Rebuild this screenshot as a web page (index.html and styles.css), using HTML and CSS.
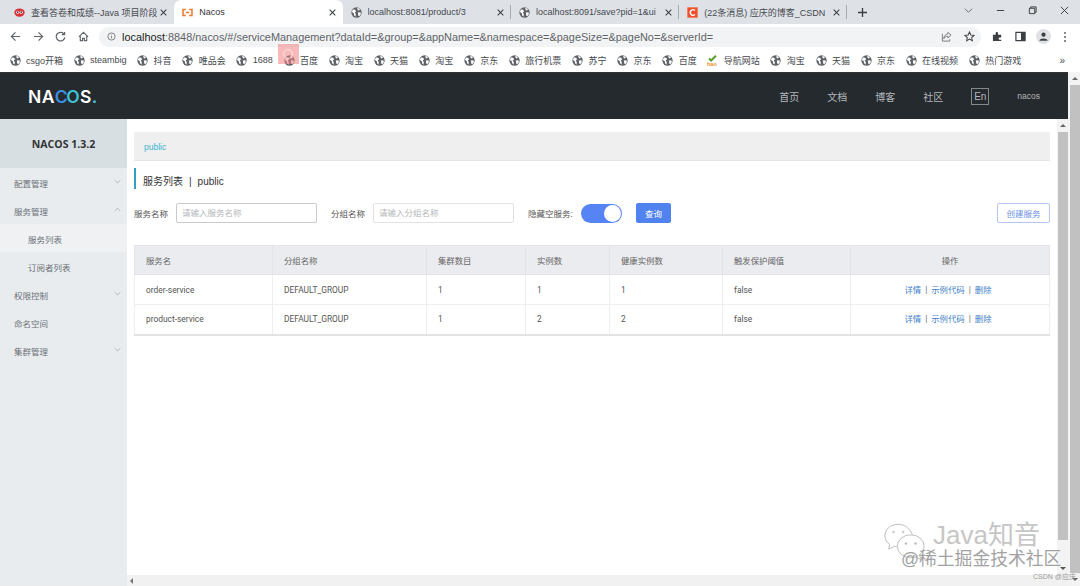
FILE: index.html
```html
<!DOCTYPE html>
<html lang="zh">
<head>
<meta charset="utf-8">
<title>Nacos</title>
<link rel="stylesheet" href="styles.css">
</head>
<body>
<svg class="defs" width="0" height="0" aria-hidden="true">
  <symbol id="globe" viewBox="0 0 16 16"><circle cx="8" cy="8" r="7.500" fill="#5f6368"/><path d="M3 3.500l3 .5 1.500 2-2 2 1.500 2.500-.5 3.500-2-2-.5-3L1 7zM9 1.500l3 .5 1 2-2.500 1-1-1.500zM10 8l3.500-.5L14.500 10 12 13.500l-1.500-1z" fill="#fff"/></symbol>
  <symbol id="close" viewBox="0 0 10 10"><path d="M1 1l8 8M9 1l-8 8" stroke="#3c4043" stroke-width="1.500" fill="none"/></symbol>
  <symbol id="down" viewBox="0 0 10 6"><path d="M1 1l4 4 4-4" stroke="#9aa0a6" stroke-width="1" fill="none"/></symbol>
  <symbol id="up" viewBox="0 0 10 6"><path d="M1 5l4-4 4 4" stroke="#9aa0a6" stroke-width="1" fill="none"/></symbol>
</svg>

<div class="tabstrip">
  <div class="tab">
    <svg class="fav" viewBox="0 0 16 16"><ellipse cx="8" cy="8" rx="7.500" ry="6" fill="#d9303a"/><circle cx="5.500" cy="7.500" r="2.200" fill="#fff"/><circle cx="10.500" cy="7.500" r="2.200" fill="#fff"/><circle cx="5.500" cy="7.500" r="1.200" fill="#222"/><circle cx="10.500" cy="7.500" r="1.200" fill="#222"/></svg>
    <span class="tab-title">查看答卷和成绩--Java 项目阶段</span>
    <svg class="tab-x"><use href="#close"/></svg>
  </div>
  <div class="tab active">
    <svg class="fav" viewBox="0 0 16 16"><path d="M5.500 3.500H1.500v9h4M10.500 3.500h4v9h-4M5.500 8h5" stroke="#f0762b" stroke-width="2.200" fill="none"/></svg>
    <span class="tab-title">Nacos</span>
    <svg class="tab-x"><use href="#close"/></svg>
  </div>
  <div class="tab">
    <svg class="fav"><use href="#globe"/></svg>
    <span class="tab-title">localhost:8081/product/3</span>
    <svg class="tab-x"><use href="#close"/></svg>
  </div>
  <i class="tab-sep"></i>
  <div class="tab">
    <svg class="fav"><use href="#globe"/></svg>
    <span class="tab-title">localhost:8091/save?pid=1&amp;ui</span>
    <svg class="tab-x"><use href="#close"/></svg>
  </div>
  <i class="tab-sep"></i>
  <div class="tab">
    <svg class="fav" viewBox="0 0 16 16"><rect x="0.500" y="0.500" width="15" height="15" fill="#f0512d"/><path d="M11.500 5A4 4 0 1 0 11.500 11" stroke="#fff" stroke-width="2" fill="none"/></svg>
    <span class="tab-title">(22条消息) 应庆的博客_CSDN</span>
    <svg class="tab-x"><use href="#close"/></svg>
  </div>
  <i class="tab-sep"></i>
  <svg class="newtab" viewBox="0 0 10 10"><path d="M5 0v10M0 5h10" stroke="#3c4043" stroke-width="1.500"/></svg>
  <div class="win-controls">
    <svg class="wc" viewBox="0 0 10 10"><path d="M1 3l4 4 4-4" stroke="#5f6368" fill="none"/></svg>
    <svg class="wc" viewBox="0 0 10 10"><path d="M1 5h8" stroke="#333"/></svg>
    <svg class="wc" viewBox="0 0 10 10"><path d="M1.500 2.500h6v6h-6zM3 2.500V1h6v6H7.500" stroke="#333" fill="none"/></svg>
    <svg class="wc" viewBox="0 0 10 10"><path d="M1 1l8 8M9 1l-8 8" stroke="#333" fill="none"/></svg>
  </div>
</div>

<div class="toolbar">
  <svg class="nav" viewBox="0 0 12 12"><path d="M11 6H1.500M6 1.500L1.500 6 6 10.500" stroke="#5f6368" stroke-width="1.300" fill="none"/></svg>
  <svg class="nav" viewBox="0 0 12 12"><path d="M1 6h9.500M6 1.500L10.500 6 6 10.500" stroke="#5f6368" stroke-width="1.300" fill="none"/></svg>
  <svg class="nav" viewBox="0 0 12 12"><path d="M10 3.500A4.700 4.700 0 1 0 10.700 7M10.500 1v3h-3" stroke="#5f6368" stroke-width="1.300" fill="none"/></svg>
  <svg class="nav" viewBox="0 0 12 12"><path d="M1 6.500L6 1.500l5 5M2.500 5.500v5h2.500V8h2v2.500h2.500v-5" stroke="#5f6368" stroke-width="1.200" fill="none"/></svg>
  <div class="omnibox">
    <svg class="info" viewBox="0 0 12 12"><circle cx="6" cy="6" r="4.800" stroke="#5f6368" fill="none"/><path d="M6 5.500v3M6 3.500v1" stroke="#5f6368"/></svg>
    <span class="url"><b>localhost</b>:8848/nacos/#/serviceManagement?dataId=&amp;group=&amp;appName=&amp;namespace=&amp;pageSize=&amp;pageNo=&amp;serverId=</span>
    <svg class="omni-icon" viewBox="0 0 12 12"><path d="M7.500 1.500L11 4.500 7.500 7.500V5.800C5 5.800 3.500 7 3 8.500 3 5.500 5 3.500 7.500 3.300zM1.500 3v8h8V9" stroke="#777" fill="none"/></svg>
    <svg class="omni-icon" viewBox="0 0 12 12"><path d="M6 1l1.500 3.300 3.500.4-2.600 2.400.7 3.500L6 8.800 2.900 10.600l.7-3.500L1 4.700l3.500-.4z" stroke="#444" stroke-width="1.100" fill="none"/></svg>
  </div>
  <svg class="ext" viewBox="0 0 12 12"><path d="M1 4h3V2.500a1.300 1.300 0 0 1 2.600 0V4H10v3H8.500a1.300 1.300 0 0 0 0 2.600H10V11H1z" fill="#3c4043"/></svg>
  <svg class="ext side" viewBox="0 0 12 12"><path d="M1 1.500h10v9H1z" stroke="#3c4043" stroke-width="1.300" fill="none"/><rect x="6.500" y="1.500" width="4.500" height="9" fill="#3c4043"/></svg>
  <span class="avatar"><svg viewBox="0 0 12 12"><circle cx="6" cy="4" r="2.300" fill="#3c4043"/><path d="M1.500 10.500c.5-3 8.500-3 9 0z" fill="#3c4043"/></svg></span>
  <span class="kebab"><i></i><i></i><i></i></span>
</div>

<div class="bookmarks">
  <a class="bm"><svg><use href="#globe"/></svg>csgo开箱</a>
  <a class="bm"><svg><use href="#globe"/></svg>steambig</a>
  <a class="bm"><svg><use href="#globe"/></svg>抖音</a>
  <a class="bm"><svg><use href="#globe"/></svg>唯品会</a>
  <a class="bm"><svg><use href="#globe"/></svg>1688</a>
  <a class="bm"><svg><use href="#globe"/></svg>百度<span class="pin"><i></i></span></a>
  <a class="bm"><svg><use href="#globe"/></svg>淘宝</a>
  <a class="bm"><svg><use href="#globe"/></svg>天猫</a>
  <a class="bm"><svg><use href="#globe"/></svg>淘宝</a>
  <a class="bm"><svg><use href="#globe"/></svg>京东</a>
  <a class="bm"><svg><use href="#globe"/></svg>旅行机票</a>
  <a class="bm"><svg><use href="#globe"/></svg>苏宁</a>
  <a class="bm"><svg><use href="#globe"/></svg>京东</a>
  <a class="bm"><svg><use href="#globe"/></svg>百度</a>
  <a class="bm"><svg viewBox="0 0 16 16"><path d="M3 5l3 3 7-7" stroke="#5aa02c" stroke-width="3" fill="none"/><text x="0" y="15.500" font-size="8" font-weight="700" fill="#f08a24">hao</text></svg>导航网站</a>
  <a class="bm"><svg><use href="#globe"/></svg>淘宝</a>
  <a class="bm"><svg><use href="#globe"/></svg>天猫</a>
  <a class="bm"><svg><use href="#globe"/></svg>京东</a>
  <a class="bm"><svg><use href="#globe"/></svg>在线视频</a>
  <a class="bm"><svg><use href="#globe"/></svg>热门游戏</a>
  <span class="more">»</span>
</div>

<div class="viewport">
  <div class="page">
    <header class="nacos-head">
      <div class="logo">NA<span class="logo-c">C</span><span class="logo-o">O</span>S<span class="logo-dot">.</span></div>
      <nav class="top-nav">
        <a>首页</a><a>文档</a><a>博客</a><a>社区</a><a class="lang">En</a><a class="user">nacos</a>
      </nav>
    </header>
    <div class="main">
      <aside class="sidebar">
        <div class="brand">NACOS 1.3.2</div>
        <div class="mi">配置管理<svg><use href="#down"/></svg></div>
        <div class="mi">服务管理<svg><use href="#up"/></svg></div>
        <div class="mi sub current">服务列表</div>
        <div class="mi sub">订阅者列表</div>
        <div class="mi">权限控制<svg><use href="#down"/></svg></div>
        <div class="mi">命名空间</div>
        <div class="mi">集群管理<svg><use href="#down"/></svg></div>
      </aside>
      <div class="right">
        <div class="right-top">
          <main class="content">
            <div class="ns-bar"><a>public</a></div>
            <h1 class="title">服务列表<span class="title-sep">|</span>public</h1>
            <form class="filters">
              <label class="flabel">服务名称</label>
              <input class="finput first" placeholder="请输入服务名称">
              <label class="flabel">分组名称</label>
              <input class="finput second" placeholder="请输入分组名称">
              <label class="flabel">隐藏空服务:</label>
              <span class="switch"><i></i></span>
              <button type="button" class="btn primary">查询</button>
              <button type="button" class="btn outline">创建服务</button>
            </form>
            <table class="grid">
              <colgroup><col class="c1"><col class="c2"><col class="c3"><col class="c4"><col class="c5"><col class="c6"><col class="c7"></colgroup>
              <thead>
                <tr><th>服务名</th><th>分组名称</th><th>集群数目</th><th>实例数</th><th>健康实例数</th><th>触发保护阈值</th><th class="center">操作</th></tr>
              </thead>
              <tbody>
                <tr><td>order-service</td><td>DEFAULT_GROUP</td><td>1</td><td>1</td><td>1</td><td>false</td><td class="center"><a>详情</a><span class="pipe">|</span><a>示例代码</a><span class="pipe">|</span><a>删除</a></td></tr>
                <tr><td>product-service</td><td>DEFAULT_GROUP</td><td>1</td><td>2</td><td>2</td><td>false</td><td class="center"><a>详情</a><span class="pipe">|</span><a>示例代码</a><span class="pipe">|</span><a>删除</a></td></tr>
              </tbody>
            </table>
          </main>
          <div class="scroll inner-scroll"><span class="arrow up"></span><span class="thumb"></span><span class="arrow dn"></span></div>
        </div>
        <div class="hscroll"><span class="arrow-left"></span></div>
      </div>
    </div>
  </div>
  <div class="scroll outer-scroll"><span class="arrow up"></span><span class="thumb"></span><span class="arrow dn"></span></div>
</div>

<div class="watermark">
  <svg class="wechat" viewBox="0 0 46 40"><path d="M16 2C8 2 2 7 2 14c0 4 2 7 5 9l-1 5 6-3c1 .3 2 .4 3 .4M31 14C29 7 23 2 16 2" stroke="#bbb" fill="#fff"/><ellipse cx="29" cy="25" rx="14" ry="12" stroke="#bbb" fill="#fff"/><path d="M38 34l2 5-6-3" stroke="#bbb" fill="#fff"/><circle cx="24" cy="22" r="1.300" fill="#bbb"/><circle cx="34" cy="22" r="1.300" fill="#bbb"/><circle cx="11" cy="10" r="1.300" fill="#ccc"/><circle cx="21" cy="10" r="1.300" fill="#ccc"/></svg>
  <span class="wm-1">Java知音</span>
  <span class="wm-2">@稀土掘金技术社区</span>
  <span class="wm-3">CSDN @应庆</span>
</div>
</body>
</html>
```
FILE: styles.css
```css
* { box-sizing: border-box; }
html, body { margin: 0; padding: 0; height: 100%; overflow: hidden; }
body { width: 1080px; height: 586px; position: relative; display: flex; flex-direction: column; font-family: "Liberation Sans", "Noto Sans CJK SC", sans-serif; color: #333; background: #fff; }
.defs { position: absolute; }

.tabstrip { height: 24px; flex: none; background: #dee1e6; display: flex; align-items: flex-end; padding-left: 6px; }
.tab { width: 168.300px; height: 24px; display: flex; align-items: center; padding: 0 7px 0 8px; font-size: 9px; color: #45494e; flex: none; }
.tab .fav { width: 11px; height: 11px; flex: none; margin-right: 6px; }
.tab-title { flex: 1; white-space: nowrap; overflow: hidden; }
.tab-x { width: 7px; height: 7px; flex: none; margin-left: 3px; }
.active { background: #fff; border-radius: 7px 7px 0 0; color: #333; }
.tab-sep { width: 1px; height: 14px; margin-left: -1px; background: #a8abb0; align-self: center; flex: none; }
.newtab { width: 9px; height: 9px; margin-left: 11px; align-self: center; flex: none; }
.win-controls { margin-left: auto; align-self: flex-start; display: flex; gap: 23px; padding: 6px 11px 0 0; }
.wc { width: 9px; height: 9px; display: block; }

.toolbar { height: 25px; flex: none; background: #fff; display: flex; align-items: center; padding-left: 10px; }
.nav { width: 11px; height: 11px; margin-right: 11.500px; flex: none; }
.omnibox { margin-left: -1px; width: 882px; height: 20px; border-radius: 10px; background: #f1f3f4; display: flex; align-items: center; padding: 0 6.500px 0 7.500px; flex: none; }
.info { width: 9px; height: 9px; margin-right: 6.500px; flex: none; }
.url { font-size: 10.900px; color: #5f6368; white-space: nowrap; flex: 1; }
.url b { font-weight: 400; color: #222; }
.omni-icon { width: 11px; height: 11px; margin-left: 12px; flex: none; }
.ext { width: 11px; height: 11px; margin-left: 11px; flex: none; }
.ext.side { margin-left: 11.500px; }
.avatar { width: 15px; height: 15px; border-radius: 50%; background: #dfe1e5; margin-left: 10px; display: flex; align-items: center; justify-content: center; flex: none; }
.avatar svg { width: 11px; height: 11px; }
.kebab { display: flex; flex-direction: column; gap: 2px; margin-left: 13.500px; }
.kebab i { width: 2px; height: 2px; background: #5f6368; border-radius: 50%; }

.bookmarks { height: 23px; flex: none; background: #fff; display: flex; align-items: center; padding: 0 15px 1px 9.500px; font-size: 9px; color: #45494e; }
.bm { display: flex; align-items: center; position: relative; white-space: nowrap; margin-right: 10.700px; }
.bm svg { width: 11px; height: 11px; margin-right: 5.400px; flex: none; }
.pin { position: absolute; left: -6px; top: -10px; width: 21px; height: 20px; background: rgba(240,130,130,.55); display: flex; align-items: center; justify-content: center; }
.pin i { width: 10px; height: 10px; border: 1px solid rgba(255,255,255,.6); border-radius: 50%; }
.more { margin-left: auto; font-size: 10px; }

.viewport { flex: 1; min-height: 0; display: flex; }
.page { flex: 1; min-width: 0; display: flex; flex-direction: column; }
.nacos-head { height: 47px; flex: none; background: #252a2f; border-top: 1px solid #333; display: flex; align-items: center; justify-content: space-between; padding: 0 28px; color: #fff; }
.logo { font-size: 17.500px; font-weight: 600; letter-spacing: .4px; font-family: "Inter", "Liberation Sans", sans-serif; display: flex; }
.logo-c { color: #3b8fe0; }
.logo-o { color: #3fc1d6; margin-left: -2px; }
.logo-dot { color: #3fc1d6; }
.top-nav { display: flex; align-items: center; gap: 28px; font-size: 10px; color: #b4b7ba; }
.top-nav .lang { border: 1px solid #85888b; width: 18px; height: 17px; display: flex; align-items: center; justify-content: center; }
.top-nav .user { font-size: 8.500px; }

.main { flex: 1; min-height: 0; display: flex; }
.sidebar { width: 127px; flex: none; background: #e9ecef; font-size: 8.500px; color: #6b7177; }
.brand { height: 49px; background: #d8dfe3; display: flex; align-items: center; justify-content: center; font-size: 10.500px; font-weight: 700; color: #333; font-family: "Open Sans", sans-serif; }
.mi { height: 28px; display: flex; align-items: center; justify-content: space-between; padding: 1px 6px 0 14px; }
.mi svg { width: 7px; height: 5px; margin-top: -2px; }
.sub { padding-left: 28px; }
.current { background: #eff1f3; }

.right { flex: 1; min-width: 0; display: flex; flex-direction: column; }
.right-top { flex: 1; min-height: 0; display: flex; }
.content { flex: 1; min-width: 0; padding: 13px 7px 0 7px; }
.ns-bar { height: 29px; background: #efefef; border-bottom: 1px solid #e4e4e4; display: flex; align-items: center; padding: 1px 0 0 10px; font-size: 8.500px; }
.ns-bar a { color: #39b5cf; }
.title { margin: 7px 0 0; height: 21px; border-left: 2px solid #2f9fc4; padding-left: 7px; font-size: 10px; font-weight: 400; line-height: 28px; color: #333; display: flex; }
.title-sep { margin: 0 6px; }
.filters { display: flex; align-items: center; margin-top: 14px; height: 20px; font-size: 8.500px; color: #555; }
.flabel { white-space: nowrap; }
.finput { width: 141px; height: 20px; margin: 0 14px 0 8px; border: 1px solid #c8cacd; border-radius: 2px; padding: 0 5px; font: inherit; background: #fff; outline: none; flex: none; }
.finput::placeholder { color: #b5b8bc; }
.finput.second { border-color: #e0e2e5; }
.switch { width: 41px; height: 19px; border-radius: 10px; background: #5684f5; margin-left: 8px; position: relative; flex: none; }
.switch i { position: absolute; right: 1px; top: 1px; width: 17px; height: 17px; border-radius: 50%; background: #fff; }
.btn { font: inherit; height: 20px; border-radius: 2px; padding: 0; flex: none; }
.primary { width: 35px; margin-left: 14px; background: #5082f0; border: 1px solid #5082f0; color: #fff; }
.outline { width: 53px; margin-left: auto; background: #fff; border: 1px solid #b4c6ef; color: #6d90e4; }

.grid { width: 915px; margin-top: 22px; border-collapse: collapse; table-layout: fixed; font-family: Roboto, "Noto Sans CJK SC", sans-serif; font-size: 8.400px; color: #555; border-bottom: 2px solid #e2e3e5; }
.c1 { width: 138px; } .c2 { width: 154px; } .c3 { width: 99px; } .c4 { width: 84px; } .c5 { width: 113px; } .c6 { width: 128px; } .c7 { width: 199px; }
.grid th, .grid td { border: 1px solid #eceef0; text-align: left; padding: 0 10px 0 11px; font-weight: 400; height: 30px; }
.grid th { background: #ebecef; height: 29px; padding-bottom: 1px; border-color: #e2e4e7; color: #666; }
.grid .center { text-align: center; padding: 0 15px 2px 11px; }
.grid th.center { padding: 0 11px 1px; }
.grid a { color: #3f7fc8; }
.pipe { margin: 0 4px; color: #666; }

.scroll { flex: none; display: flex; flex-direction: column; background: #f3f3f3; }
.thumb { display: block; background: #c1c1c1; }
.arrow { display: flex; justify-content: center; align-items: center; flex: none; position: relative; }
.arrow::after { content: ""; border: 3px solid transparent; }
.arrow.up::after { border-bottom-color: #666; border-top: 0; }
.arrow.dn::after { border-top-color: #555; border-bottom: 0; }
.inner-scroll { width: 11px; padding-left: 1px; }
.inner-scroll .arrow { height: 13px; width: 10px; }
.inner-scroll .thumb { width: 10px; height: 408px; margin-bottom: auto; }
.outer-scroll { width: 12px; padding-left: 2px; }
.outer-scroll .arrow { height: 13px; width: 10px; }
.outer-scroll .thumb { flex: 1; }
.hscroll { height: 11px; flex: none; background: #f1f1f1; position: relative; }
.arrow-left { position: absolute; left: 3px; top: 3px; border: 3px solid transparent; border-right-color: #777; border-left: 0; }

.watermark { position: absolute; left: 0; top: 0; width: 1080px; height: 586px; pointer-events: none; }
.wechat { position: absolute; left: 883px; top: 522px; width: 44px; height: 39px; }
.wm-1 { position: absolute; left: 933px; top: 521px; font-size: 26px; line-height: 28px; color: #c6c6c6; }
.wm-2 { position: absolute; left: 901px; top: 549px; font-size: 17.800px; line-height: 20px; color: #a2a2a2; white-space: nowrap; }
.wm-3 { position: absolute; left: 1033px; top: 571px; font-size: 7px; line-height: 12px; color: #999; white-space: nowrap; }
```
